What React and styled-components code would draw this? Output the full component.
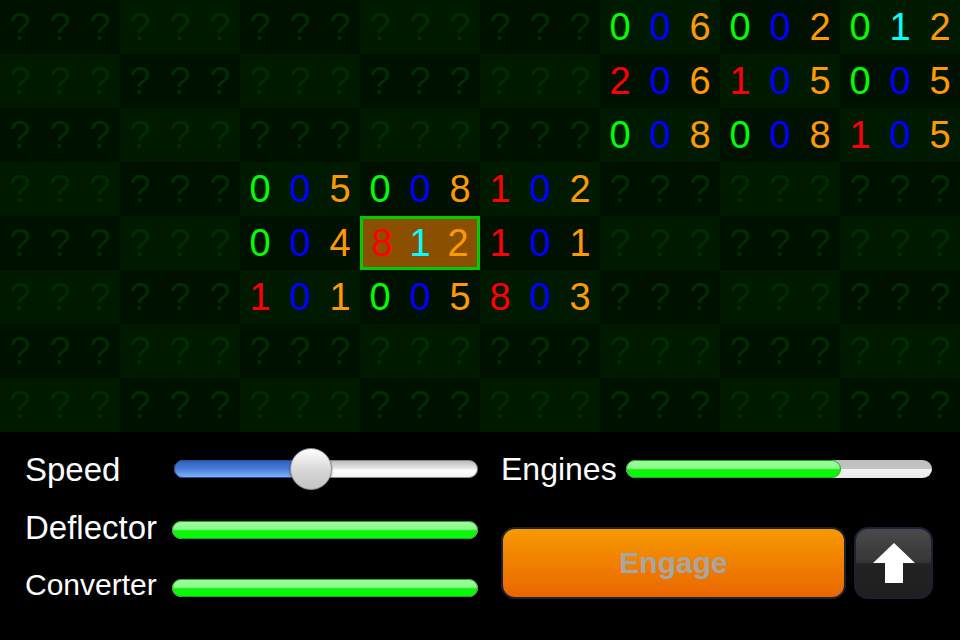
import React from 'react';
import styled, { createGlobalStyle } from 'styled-components';

const GlobalStyle = createGlobalStyle`
  html, body {
    margin: 0;
    padding: 0;
    background: #000;
  }
  body {
    font-family: 'Liberation Sans', Arial, Helvetica, sans-serif;
  }
`;

// palette
const DIGIT = {
  g: '#00ff00',
  b: '#0000ff',
  o: '#ff9900',
  r: '#ff0000',
  c: '#00ffff'
};

// known blocks: [blockRow, blockCol] -> 3 chars + colours
const KNOWN = {
  '0-5': ['006', 'gbo'],
  '0-6': ['002', 'gbo'],
  '0-7': ['012', 'gco'],
  '1-5': ['206', 'rbo'],
  '1-6': ['105', 'rbo'],
  '1-7': ['005', 'gbo'],
  '2-5': ['008', 'gbo'],
  '2-6': ['008', 'gbo'],
  '2-7': ['105', 'rbo'],
  '3-2': ['005', 'gbo'],
  '3-3': ['008', 'gbo'],
  '3-4': ['102', 'rbo'],
  '4-2': ['004', 'gbo'],
  '4-3': ['812', 'rco'],
  '4-4': ['101', 'rbo'],
  '5-2': ['101', 'rbo'],
  '5-3': ['005', 'gbo'],
  '5-4': ['803', 'rbo']
};

const Screen = styled.div`
  width: 960px;
  height: 640px;
  display: flex;
  flex-direction: column;
  background: #000;
  overflow: hidden;
`;

const Board = styled.div`
  display: grid;
  grid-template-columns: repeat(8, 120px);
  grid-template-rows: repeat(8, 54px);
`;

const Block = styled.div`
  display: grid;
  grid-template-columns: repeat(3, 1fr);
  box-sizing: border-box;
  background: ${(p) => (p.$hl ? '#8a5000' : p.$light ? '#001a00' : '#001100')};
  border: ${(p) => (p.$hl ? '3px solid #00cc00' : 'none')};
`;

const Cell = styled.span`
  display: flex;
  align-items: center;
  justify-content: center;
  font-size: 38px;
  line-height: 1;
  color: ${(p) => p.$color || '#002d00'};
`;

const Panel = styled.div`
  flex: 1;
  display: grid;
  grid-template-columns: 453px 432px;
  column-gap: 23px;
  padding: 8px 0 0 25px;
`;

const Controls = styled.div`
  display: grid;
  grid-template-columns: 147px 306px;
  grid-auto-rows: 58px;
  align-items: center;
`;

const Label = styled.span`
  color: #fff;
  font-size: ${(p) => p.$size || 31}px;
  line-height: 1;
  white-space: nowrap;
`;

const SliderTrack = styled.div`
  position: relative;
  height: 18px;
  margin-left: 2px;
  border-radius: 9px;
  box-sizing: border-box;
  border: 1px solid #8a8a8a;
  background: linear-gradient(#bcbcbc, #e6e6e6 45%, #ffffff 60%, #f4f4f4);
`;

const SliderFill = styled.div`
  position: absolute;
  left: -1px;
  top: -1px;
  bottom: -1px;
  border-radius: 9px 0 0 9px;
  border: 1px solid #244f9e;
  background: linear-gradient(#2e5fbd, #4a7fd8 50%, #7fb0f4);
`;

const Thumb = styled.div`
  position: absolute;
  top: 50%;
  width: 42px;
  height: 42px;
  margin: -21px 0 0 -21px;
  border-radius: 50%;
  box-sizing: border-box;
  border: 1px solid #8c8c8c;
  background: linear-gradient(#fdfdfd, #d6d6d6 55%, #c4c4c4);
  box-shadow: 0 1px 2px rgba(0, 0, 0, 0.5);
`;

const Bar = styled.div`
  position: relative;
  height: 18px;
  margin-top: ${(p) => p.$shift || 0}px;
  border-radius: 9px;
  overflow: hidden;
  background: linear-gradient(#bdbdbd, #c4c4c4 48%, #f2f2f2 52%, #e8e8e8);
`;

const BarFill = styled.div`
  height: 100%;
  box-sizing: border-box;
  border-radius: 9px;
  border: 1.5px solid #1fa81f;
  background: linear-gradient(#9cff9c, #8cf88c 45%, #11f011 55%, #00ff00);
`;

const Side = styled.div`
  display: grid;
  grid-template-rows: 58px 1fr;
`;

const EngineRow = styled.div`
  display: flex;
  align-items: center;
  gap: 9px;
  & > div {
    width: 306px;
    flex: none;
  }
`;

const ButtonRow = styled.div`
  display: flex;
  gap: 8px;
  padding-top: 29px;
`;

const Button = styled.button`
  height: 72px;
  box-sizing: border-box;
  border: 2px solid #1b2135;
  border-radius: 14px;
  padding: 0;
  display: flex;
  align-items: center;
  justify-content: center;
  font-family: inherit;
  cursor: pointer;
`;

const EngageButton = styled(Button)`
  width: 345px;
  background: linear-gradient(#f89a00, #f07d00 55%, #ea6600);
  color: #a6a6a6;
  font-size: 30px;
  font-weight: bold;
`;

const ArrowButton = styled(Button)`
  width: 79px;
  background: linear-gradient(#4a4a4a, #363636 48%, #222 52%, #1f1f1f);
`;

const UpArrow = () => (
  <svg width="42" height="40" viewBox="0 0 42 40">
    <path d="M21 0 L42 20 L30 20 L30 40 L12 40 L12 20 L0 20 Z" fill="#fff" />
  </svg>
);

const Meter = ({ value, shift }) => (
  <Bar $shift={shift}>
    <BarFill style={{ width: `${value}%` }} />
  </Bar>
);

const App = () => {
  const blocks = [];
  for (let r = 0; r < 8; r++) {
    for (let c = 0; c < 8; c++) {
      const key = `${r}-${c}`;
      const known = KNOWN[key];
      blocks.push(
        <Block key={key} $light={(r + c) % 2 === 1} $hl={key === '4-3'}>
          {[0, 1, 2].map((i) =>
            known ? (
              <Cell key={i} $color={DIGIT[known[1][i]]}>
                {known[0][i]}
              </Cell>
            ) : (
              <Cell key={i}>?</Cell>
            )
          )}
        </Block>
      );
    }
  }

  const speed = 45;

  return (
    <>
      <GlobalStyle />
      <Screen>
        <Board>{blocks}</Board>
        <Panel>
          <Controls>
            <Label $size={33}>Speed</Label>
            <SliderTrack>
              <SliderFill style={{ width: `${speed}%` }} />
              <Thumb style={{ left: `${speed}%` }} />
            </SliderTrack>
            <Label $size={33}>Deflector</Label>
            <Meter value={100} shift={6} />
            <Label $size={30}>Converter</Label>
            <Meter value={100} shift={6} />
          </Controls>
          <Side>
            <EngineRow>
              <Label $size={32}>Engines</Label>
              <Meter value={70.5} />
            </EngineRow>
            <ButtonRow>
              <EngageButton>Engage</EngageButton>
              <ArrowButton>
                <UpArrow />
              </ArrowButton>
            </ButtonRow>
          </Side>
        </Panel>
      </Screen>
    </>
  );
};

export default App;
